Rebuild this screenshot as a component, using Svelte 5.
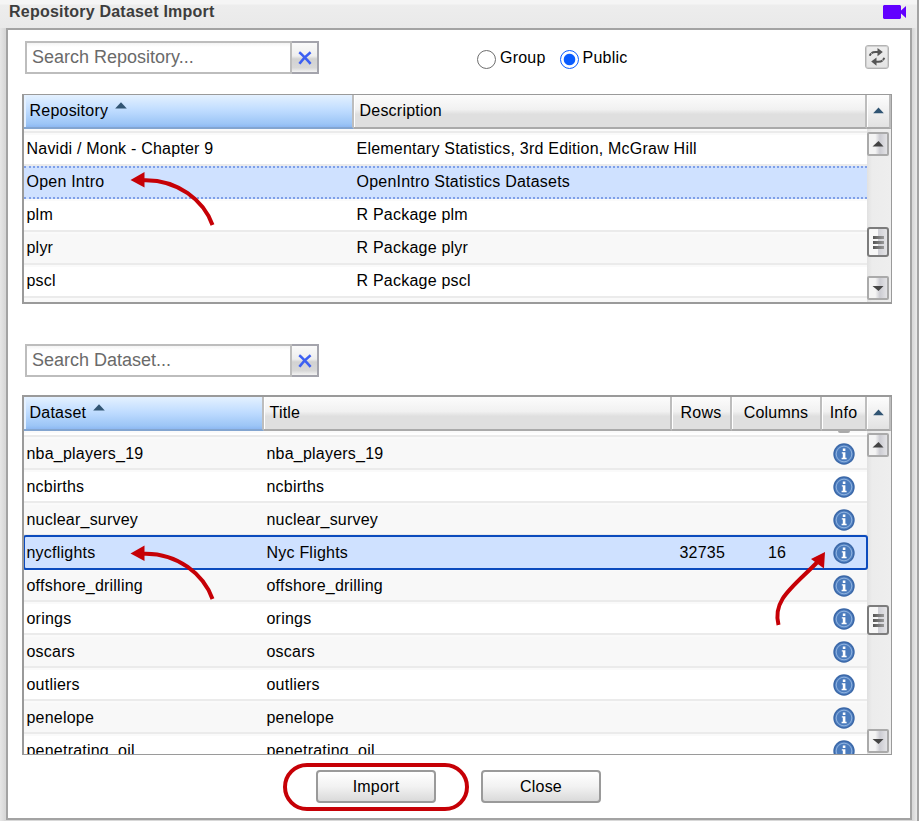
<script>
  const repositories = [
    { name: 'Navidi / Monk - Chapter 9', description: 'Elementary Statistics, 3rd Edition, McGraw Hill' },
    { name: 'Open Intro', description: 'OpenIntro Statistics Datasets' },
    { name: 'plm', description: 'R Package plm' },
    { name: 'plyr', description: 'R Package plyr' },
    { name: 'pscl', description: 'R Package pscl' }
  ];
  const datasets = [
    { name: 'nba_players_19', title: 'nba_players_19' },
    { name: 'ncbirths', title: 'ncbirths' },
    { name: 'nuclear_survey', title: 'nuclear_survey' },
    { name: 'nycflights', title: 'Nyc Flights', rows: 32735, columns: 16 },
    { name: 'offshore_drilling', title: 'offshore_drilling' },
    { name: 'orings', title: 'orings' },
    { name: 'oscars', title: 'oscars' },
    { name: 'outliers', title: 'outliers' },
    { name: 'penelope', title: 'penelope' },
    { name: 'penetrating_oil', title: 'penetrating_oil' }
  ];
  let scope = $state('public');
  let selectedRepository = $state('Open Intro');
  let selectedDataset = $state('nycflights');
</script>

{#snippet info()}
  <svg class="info" width="22" height="22" viewBox="0 0 22 22">
    <circle cx="11" cy="11" r="10.7" fill="#3b68a8" />
    <circle cx="11" cy="11" r="9.2" fill="#5584c4" />
    <circle cx="11" cy="11" r="7.8" fill="#4a7bbd" stroke="#8fb2de" stroke-width="1" />
    <path d="M9.8 5.5h2.6v2.4H9.8zM8.8 9.200h3.600v5.600h1.200v1.400H8.600v-1.400h1.200v-4.200H8.800z" fill="#fff" />
  </svg>
{/snippet}

{#snippet search(label)}
  <div class="search">
    <input type="text" placeholder={label} />
    <button class="clear" aria-label="Clear">
      <svg width="14" height="14" viewBox="0 0 14 14"><path d="M1.2 1.2C5 4 9 9 12.6 12.8M12.6 1.2C9 4 4 9 1.4 12.8" fill="none" stroke="#3c5ff2" stroke-width="2.6" /></svg>
    </button>
  </div>
{/snippet}

{#snippet sortUp()}
  <svg class="sort" width="12" height="7" viewBox="0 0 12 7"><path d="M6 .3 11.8 6.500H.2z" fill="#315573" /></svg>
{/snippet}

{#snippet scrollbar(kind)}
  <div class="scrollbar {kind}">
    <div class="step up"><svg width="24" height="24" viewBox="0 0 24 24"><path d="m12.500 9 5 5.400h-11z" fill="#444" /></svg></div>
    <div class="thumb"><i></i><i></i><i></i></div>
    <div class="step down"><svg width="24" height="24" viewBox="0 0 24 24"><path d="M6.500 10h11l-5 5z" fill="#444" /></svg></div>
  </div>
{/snippet}

<div class="window">
  <header>
    <h1>Repository Dataset Import</h1>
    <svg width="23" height="14" viewBox="0 0 23 14"><path d="M1 0h16l1 1v4.500L23 1v12l-5-4.500V13l-1 1H1l-1-1V1z" fill="#6200ff" /></svg>
  </header>
  <main>
    <div class="toolbar">
      {@render search('Search Repository...')}
      <div class="radios">
        <label><input type="radio" bind:group={scope} value="group" /><span class="dot"></span>Group</label>
        <label><input type="radio" bind:group={scope} value="public" /><span class="dot"></span>Public</label>
      </div>
      <button class="refresh" aria-label="Refresh">
        <svg width="24" height="24" viewBox="0 0 24 24">
          <path d="M4.800 10.800C5.500 8 8 7 10.500 7H13M19.200 12.800C18.500 15.500 16 16.800 13.500 16.800H11" fill="none" stroke="#555" stroke-width="2" stroke-dasharray="2.600 .5 20" />
          <path d="m12.500 3 5.300 4.100-5.300 4.100zM11.500 12.500v8.200l-5.300-4.100z" fill="#555" />
        </svg>
      </button>
    </div>

    <section class="grid repos">
      <div class="head">
        <div class="th sorted c1">Repository {@render sortUp()}</div>
        <div class="th c2">Description</div>
        <div class="th corner">{@render sortUp()}</div>
      </div>
      <div class="body">
        <div class="rows">
          <div class="row sliver"></div>
          {#each repositories as r}
            <div class="row" class:selected={r.name === selectedRepository}>
              <div class="td c1">{r.name}</div>
              <div class="td c2">{r.description}</div>
            </div>
          {/each}
          <div class="row"></div>
        </div>
        {@render scrollbar('short')}
      </div>
    </section>

    <div class="toolbar second">{@render search('Search Dataset...')}</div>

    <section class="grid data">
      <div class="head">
        <div class="th sorted c1">Dataset {@render sortUp()}</div>
        <div class="th c2">Title</div>
        <div class="th c3">Rows</div>
        <div class="th c4">Columns</div>
        <div class="th c5">Info</div>
        <div class="th corner">{@render sortUp()}</div>
      </div>
      <div class="body">
        <div class="rows">
          <div class="row sliver"><div class="peek"></div></div>
          {#each datasets as d}
            <div class="row" class:selected={d.name === selectedDataset}>
              <div class="td c1">{d.name}</div>
              <div class="td c2">{d.title}</div>
              <div class="td c3">{d.rows ?? ''}</div>
              <div class="td c4">{d.columns ?? ''}</div>
              <div class="td c5">{@render info()}</div>
            </div>
          {/each}
        </div>
        {@render scrollbar('tall')}
      </div>
    </section>

    <footer>
      <div class="ring"><button class="push">Import</button></div>
      <button class="push">Close</button>
    </footer>
  </main>

  <svg class="marks" width="919" height="821" viewBox="0 0 919 821">
    <g fill="none" stroke="#c60006" stroke-width="4">
      <path d="M143 180.200C178 179 204 201 212.500 225" />
      <path d="M143 553.700C178 552.500 204 575 212.500 599" />
      <path d="M778.500 625C772 600 793 587 817 562.500" />
    </g>
    <g fill="#c60006">
      <path d="m130.500 180 14-8v15.500z" />
      <path d="m130.500 553.500 14-8v15.500z" />
      <path d="m825 552-1 16.500-13-9.500z" />
    </g>
  </svg>
</div>

<style>
  :global(body) { margin: 0; overflow: hidden; }
  * { box-sizing: border-box; }
  .window {
    position: relative; width: 919px; height: 821px; overflow: hidden;
    padding: 0 5px 0 6px; border-right: 2px solid #a3a3a3;
    background: linear-gradient(90deg, #e6e6e6 0, #d8d8d8 5px, #d8d8d8 913px, #eaeaea 917px);
    font: 16px "Liberation Sans", Arial, sans-serif; letter-spacing: .22px; color: #000;
  }
  header {
    height: 28px; margin: 0 -5px 0 -6px; padding: 0 5px 0 9px; display: flex;
    justify-content: space-between; align-items: flex-start;
    background: linear-gradient(#f5f5f5 0 4px, #ededed 5px, #e9e9e9 28px);
  }
  h1 { margin: 2px 0 0; font-size: 16px; line-height: 20px; color: #3d3d3d; }
  header svg { margin: 5px 6px 0 0; }
  main { width: 906px; height: 792px; border: 2px solid #a3a3a3; background: #fff; padding: 11px 18px 0 14px; display: flex; flex-direction: column; }
  .toolbar { height: 53px; display: flex; padding-left: 3px; flex: none; }
  .toolbar.second { height: 51px; margin-top: 40px; }
  .search { display: flex; width: 294px; height: 33px; }
  .search input { width: 267px; height: 33px; border: 2px solid #bdbdbd; outline: 0; padding: 0 5px; font: 18px "Liberation Sans", Arial, sans-serif; background: linear-gradient(#f4f4f4, #fff 4px); }
  .search input::placeholder { color: #6a6a6a; opacity: 1; }
  .clear { width: 27px; height: 33px; padding: 0 0 0 1px; border: 2px solid #a4a4ac; border-left: 0; display: flex; align-items: center; justify-content: center; background: linear-gradient(#fafafa, #eee 45%, #d2d2d2 55%, #d8d8d8 85%, #f3f3f3); }
  .radios { display: flex; gap: 14px; margin-left: 158px; height: 34px; align-items: center; }
  .radios label { display: flex; align-items: center; gap: 4px; line-height: 20px; }
  .radios input { position: absolute; opacity: 0; }
  .dot { width: 19px; height: 19px; margin-top: 3px; border: 1px solid #6e6e6e; border-radius: 50%; background: #fff; }
  input:checked + .dot { border-color: #0a5cff; background: radial-gradient(circle, #0a5cff 5.3px, #fff 6.2px); }
  .refresh { width: 24px; height: 24px; padding: 0; margin: 4px 3px 0 auto; border: 1px solid #b3b3b3; border-radius: 3px; background: linear-gradient(#eee, #e4e4e4); box-shadow: inset 0 0 0 1px #d0d0d0; display: flex; align-items: center; justify-content: center; }
  .refresh svg { flex: none; }

  .grid { width: 870px; display: flex; flex-direction: column; flex: none; border: solid #9a9a9a; overflow: hidden; }
  .repos { height: 210px; border-width: 1px 1px 2px 2px; }
  .data { height: 360px; border-width: 2px 1px 1px 2px; }
  .head { height: 34px; display: flex; flex: none; }
  .th { height: 34px; flex: none; padding: 0 0 1px 4px; border: solid #aaa; border-width: 0 2px 2px 0; display: flex; align-items: center; box-shadow: inset 1px 0 #fff; background: linear-gradient(#fcfcfc, #f1f1f1 45%, #dfdfdf 60%, #dfdfdf); border-right-color: #bdbdbd; }
  .th.sorted { border-bottom-color: #83a5d0; box-shadow: inset 2px 0 #e5f1ff; background: linear-gradient(#e4f1ff, #bfdcff 48%, #9cc5f6 90%, #8db8f2); padding-left: 5.5px; }
  .sort { margin: -10px 0 0 7px; flex: none; }
  .repos .c1 { width: 330px; }
  .repos .c2 { width: 513px; }
  .data .c1 { width: 240px; }
  .data .c2 { width: 408px; }
  .data .c3 { width: 60px; }
  .data .c4 { width: 90px; }
  .data .c5 { width: 45px; }
  .th.c3, .th.c4, .th.c5 { justify-content: center; padding-left: 0; }
  .th.c2 { padding-left: 5.5px; }
  .th.corner { width: 24px; padding: 0; justify-content: center; background: linear-gradient(#fdfdfd, #f0f0f0 50%, #e2e2e2); }
  .corner .sort { margin: 0 0 2px; width: 11px; }
  .body { display: flex; flex: 1; min-height: 0; overflow: hidden; }
  .rows { width: 843px; flex: none; }
  .row { height: 33px; display: flex; border-top: 2px solid #fafafa; border-bottom: 2px solid #ebebeb; background: #fff; line-height: 28px; }
  .repos .row:nth-child(2n + 1) { background: #f8f8f8; }
  .data .row { line-height: 30px; }
  .data .row:nth-child(2n) { background: #f8f8f8; }
  .row.sliver { height: 4px; background: #fff; }
  .data .sliver { height: 6px; }
  .peek { width: 12px; height: 2px; margin: -2px 0 0 814px; border-radius: 0 0 8px 8px; background: #aaa; }
  .row.selected { background: #cfe1ff !important; border: dotted #7f9fe8; border-width: 2px 0; }
  .data .row.selected { position: relative; border: 1px dashed #8aa5e0; border-width: 1px 0; padding: 1px 0; outline: 2px solid #0c4bbd; outline-offset: -1px; border-radius: 2px; }
  .td { padding-left: 2.5px; white-space: nowrap; flex: none; }
  .td.c3 { padding: 0 7px 0 0; text-align: right; }
  .td.c4 { padding: 0; text-align: center; }
  .td.c5 { padding: 4px 0 0 11px; }
  .info { display: block; }

  .scrollbar { width: 24px; height: 100%; flex: none; display: flex; flex-direction: column; background: linear-gradient(90deg, #e1e1e1, #ececec 5px, #eee); padding-top: 3px; }
  .step { width: 22px; height: 24px; border: 2px solid #aaa; border-radius: 2px; flex: none; display: flex; align-items: center; justify-content: center; background: linear-gradient(90deg, #f4f4f4 35%, #ccccd2 60%, #e3e3e6); }
  .step svg { flex: none; }
  .thumb { width: 22px; height: 30px; flex: none; border: 2px solid #7c7c7c; border-radius: 3px; background: linear-gradient(90deg, #f7f7f7 50%, #d0d0d6 51%, #e4e4e6); display: flex; flex-direction: column; align-items: center; justify-content: center; gap: 2px; }
  .thumb i { width: 11px; height: 3px; background: linear-gradient(90deg, #555, #999); }
  .short .thumb { margin-top: 71px; }
  .short .down { margin-top: 19px; }
  .tall .up { margin-top: -1px; }
  .tall .thumb { margin-top: 148px; }
  .tall .down { margin-top: 94px; }

  footer { display: flex; margin: 8px 0 0 261px; align-items: flex-start; flex: none; }
  .ring { width: 186px; height: 48px; padding: 3px 0 0 29px; border: 4px solid #c60006; border-radius: 24px; }
  .push { width: 120px; height: 33px; padding: 1px 0 0; border: 2px solid #9a9a9a; border-radius: 4px; font: 16px "Liberation Sans", Arial, sans-serif; letter-spacing: .22px; color: #000; background: linear-gradient(#fff, #f2f2f2 50%, #dadada); }
  footer > .push { margin: 7px 0 0 12px; }
  .marks { position: absolute; left: 0; top: 0; pointer-events: none; }
</style>
